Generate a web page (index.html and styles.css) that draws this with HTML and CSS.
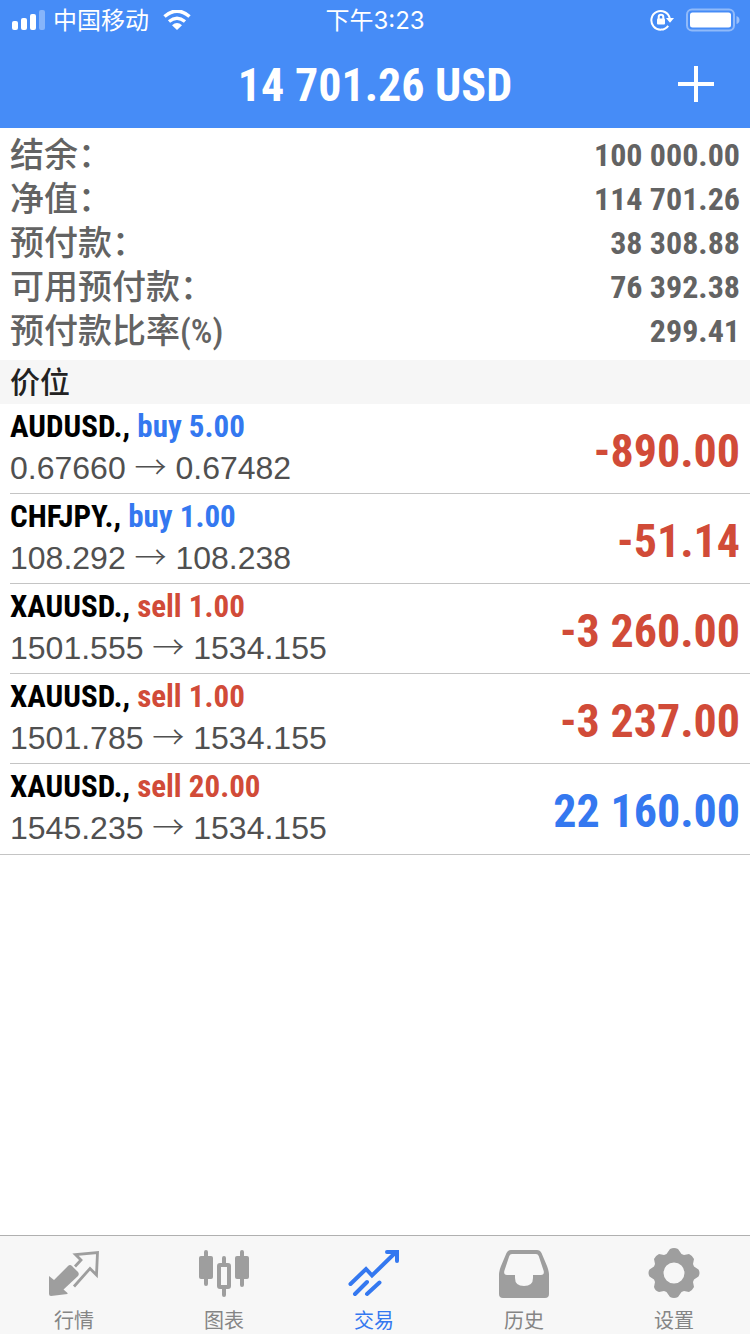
FILE: index.html
```html
<!DOCTYPE html>
<html lang="zh-CN">
<head>
<meta charset="utf-8">
<meta name="viewport" content="width=device-width, initial-scale=1">
<title>交易</title>
<link rel="stylesheet" href="styles.css">
</head>
<body>
<div class="app">
  <header class="header">
    <div class="status">
      <div class="status-left">
        <svg class="signal" viewBox="0 0 34 24" aria-hidden="true">
          <rect x="0" y="13" width="6" height="9" rx="2"/>
          <rect x="9" y="10" width="6" height="12" rx="2"/>
          <rect x="18" y="6" width="6" height="16" rx="2"/>
          <rect x="27" y="2" width="6" height="20" rx="2" opacity=".35"/>
        </svg>
        <span class="carrier">中国移动</span>
        <svg class="wifi" viewBox="0 0 28 20" aria-hidden="true">
          <path d="M1.500 6.500Q14-4.200 26.500 6.500" stroke-width="3.600"/>
          <path d="M6 11.500Q14 5 22 11.500" stroke-width="3.400"/>
          <path class="solid" d="M9 15.200Q14 11 19 15.200L14 20Z"/>
        </svg>
      </div>
      <time class="clock">下午3:23</time>
      <div class="status-right">
        <svg class="lock" viewBox="0 0 24 22" aria-hidden="true">
          <path class="line" d="M18.200 16.800A9.300 9.300 0 1 1 19.800 9.500"/>
          <path class="solid" d="M16 9H24L20 13.800Z"/>
          <rect class="solid" x="7" y="9.500" width="8" height="6" rx="1"/>
          <path class="line" d="M8.700 10V8a2.300 2.300 0 0 1 4.600 0V10"/>
        </svg>
        <svg class="battery" viewBox="0 0 54 24" aria-hidden="true">
          <rect x="1" y="1.500" width="47" height="21" rx="5" fill="none" stroke="#fff" stroke-width="2" opacity=".4"/>
          <rect x="4" y="4.500" width="41" height="15" rx="2.500" fill="#fff"/>
          <path d="M50.500 8Q53.500 9 53.500 12T50.500 16Z" fill="#fff" opacity=".45"/>
        </svg>
      </div>
    </div>
    <div class="nav">
      <h1 class="title">14 701.26 USD</h1>
      <button class="add" type="button" aria-label="新订单">
        <svg viewBox="0 0 36 36" aria-hidden="true"><path d="M0 18H36M18 0V36"/></svg>
      </button>
    </div>
  </header>

  <main class="content">
    <dl class="summary">
      <div class="summary-row"><dt>结余：</dt><dd>100 000.00</dd></div>
      <div class="summary-row"><dt>净值：</dt><dd>114 701.26</dd></div>
      <div class="summary-row"><dt>预付款：</dt><dd>38 308.88</dd></div>
      <div class="summary-row"><dt>可用预付款：</dt><dd>76 392.38</dd></div>
      <div class="summary-row"><dt>预付款比率(%)</dt><dd>299.41</dd></div>
    </dl>
    <h2 class="section">价位</h2>
    <ul class="positions">
      <li class="position">
        <div class="deal">
          <div class="symbol">AUDUSD., <span class="buy">buy 5.00</span></div>
          <div class="prices">0.67660 <span class="arrow">→</span> 0.67482</div>
        </div>
        <div class="profit loss">-890.00</div>
      </li>
      <li class="position">
        <div class="deal">
          <div class="symbol">CHFJPY., <span class="buy">buy 1.00</span></div>
          <div class="prices">108.292 <span class="arrow">→</span> 108.238</div>
        </div>
        <div class="profit loss">-51.14</div>
      </li>
      <li class="position">
        <div class="deal">
          <div class="symbol">XAUUSD., <span class="sell">sell 1.00</span></div>
          <div class="prices">1501.555 <span class="arrow">→</span> 1534.155</div>
        </div>
        <div class="profit loss">-3 260.00</div>
      </li>
      <li class="position">
        <div class="deal">
          <div class="symbol">XAUUSD., <span class="sell">sell 1.00</span></div>
          <div class="prices">1501.785 <span class="arrow">→</span> 1534.155</div>
        </div>
        <div class="profit loss">-3 237.00</div>
      </li>
      <li class="position">
        <div class="deal">
          <div class="symbol">XAUUSD., <span class="sell">sell 20.00</span></div>
          <div class="prices">1545.235 <span class="arrow">→</span> 1534.155</div>
        </div>
        <div class="profit gain">22 160.00</div>
      </li>
    </ul>
  </main>

  <nav class="tabs">
    <a class="tab" href="#quotes">
      <svg viewBox="0 0 52 52" aria-hidden="true">
        <path class="solid" d="M1 27L6 31L20 17Q22 15 24 17L30 23Q31.500 25 30 27L15.500 40.500L19.500 44V45L3 47Q1 47 1 45Z"/>
        <path class="line" d="M27 17.500L33 11L27.500 5.500L49.500 3.500L48.500 26L42 19.500L26 37.500" stroke-width="2.800"/>
      </svg>
      <span>行情</span>
    </a>
    <a class="tab" href="#charts">
      <svg viewBox="0 0 52 52" aria-hidden="true">
        <path class="line" d="M8 3V35M44 3V36M26 9V15M26 39V46" stroke-width="4" stroke-linecap="round"/>
        <rect class="solid" x="1" y="7" width="14" height="23" rx="2"/>
        <rect class="solid" x="37" y="7" width="14" height="23" rx="2"/>
        <rect class="line" x="21" y="16" width="10" height="22" rx="1" stroke-width="4"/>
      </svg>
      <span>图表</span>
    </a>
    <a class="tab active" href="#trade" aria-current="page">
      <svg viewBox="0 0 52 52" aria-hidden="true">
        <path class="line" d="M2.500 35L18 20L24 26.500L47 4M7 45L19 33M19 45L31.500 33.500" stroke-width="4" stroke-linecap="round"/>
        <path class="line" d="M39 3H49V12" stroke-width="4" stroke-linecap="round"/>
      </svg>
      <span>交易</span>
    </a>
    <a class="tab" href="#history">
      <svg viewBox="0 0 52 52" aria-hidden="true">
        <path class="solid" fill-rule="evenodd" d="M13 1H39Q42 1 43.500 4L49 17Q51 22 51 26V45Q51 49 47 49H5Q1 49 1 45V26Q1 22 3 17L8.500 4Q10 1 13 1ZM14 5Q12 5 11.300 7L6.300 22Q5.500 26 9 26H17V29Q17 37 26 37T35 29V26H43Q46.500 26 45.700 22L40.700 7Q40 5 38 5Z"/>
      </svg>
      <span>历史</span>
    </a>
    <a class="tab" href="#settings">
      <svg viewBox="0 0 52 52" aria-hidden="true">
        <path class="solid" fill-rule="evenodd" d="M18.500 5L22 0Q26-2 30 0L33.500 5L36 6L41 5Q45 7 46 10L45 15L46 17.500L50.500 20.500Q52.500 24 50.500 27.500L46 30.500L45 33L46 38Q44 42 41 43L36 42L33.500 43L30 48Q26 50 22 48L18.500 43L16 42L11 43Q7 42 6 38L7 33L6 30.500L1.500 27.500Q-.5 24 1.500 20.500L6 17.500L7 15L6 10Q7 7 11 5L16 6ZM26 13.500A10.500 10.500 0 1 0 26 34.500A10.500 10.500 0 1 0 26 13.500Z"/>
      </svg>
      <span>设置</span>
    </a>
  </nav>
</div>
</body>
</html>
```
FILE: styles.css
```css
* {
  box-sizing: border-box;
}

body,
h1,
h2,
dl,
dd,
ul {
  margin: 0;
  padding: 0;
}

body {
  background: #fff;
  font-family: "Liberation Sans", "Noto Sans CJK SC", sans-serif;
}

.app {
  display: flex;
  flex-direction: column;
  min-height: 100vh;
}

.header {
  background: #468cf7;
  color: #fff;
}

.status,
.nav {
  display: grid;
  grid-template-columns: 1fr auto 1fr;
  align-items: center;
}

.status {
  height: 40px;
  padding: 0 12px;
}

.status-left,
.status-right {
  display: flex;
  align-items: center;
}

.status-right {
  justify-content: flex-end;
  gap: 12px;
}

.signal {
  width: 34px;
  height: 24px;
  margin-right: 7px;
  fill: #fff;
}

.carrier,
.clock {
  padding-top: 2px;
  font: 400 24px/38px Inter, "Noto Sans CJK SC", sans-serif;
}

.wifi {
  width: 28px;
  height: 20px;
  margin-left: 14px;
  fill: none;
  stroke: #fff;
}

.wifi .solid {
  fill: #fff;
  stroke: none;
}

.lock {
  width: 24px;
  height: 22px;
}

.lock .line {
  fill: none;
  stroke: #fff;
  stroke-width: 2;
}

.lock .solid {
  fill: #fff;
}

.battery {
  width: 54px;
  height: 24px;
  margin-right: -2px;
}

.nav {
  height: 88px;
  padding: 0 36px;
}

.title,
.symbol,
.profit,
.summary {
  font-family: "Roboto Condensed", "Liberation Sans", "Noto Sans CJK SC", sans-serif;
  font-weight: bold;
}

.title {
  grid-column: 2;
  padding-top: 2px;
  font-size: 46px;
  line-height: 86px;
}

.add {
  justify-self: end;
  display: flex;
  padding: 0;
  border: 0;
  background: none;
}

.add svg {
  width: 36px;
  height: 36px;
  fill: none;
  stroke: #fff;
  stroke-width: 4;
}

.content {
  flex: 1;
}

.summary {
  padding: 5px 10px 7px;
  color: #636363;
  font-size: 32px;
  line-height: 44px;
}

.summary-row {
  display: flex;
  justify-content: space-between;
  height: 44px;
}

.summary dt {
  font-size: 34px;
  font-weight: 500;
}

.section {
  padding: 2px 10px 0;
  background: #f6f6f6;
  color: #222;
  font: 500 30px/42px "Liberation Sans", "Noto Sans CJK SC", sans-serif;
}

.positions {
  list-style: none;
  border-bottom: 1px solid #c4c4c4;
}

.position {
  display: flex;
  align-items: center;
  justify-content: space-between;
  height: 90px;
  margin-left: 10px;
  padding-right: 10px;
  border-bottom: 1px solid #c4c4c4;
}

.position:last-child {
  border-bottom-color: transparent;
}

.deal {
  padding-bottom: 4px;
}

.symbol {
  color: #000;
  font-size: 31px;
  line-height: 42px;
}

.prices {
  color: #505050;
  font-size: 32px;
  line-height: 40px;
}

.arrow {
  font-family: "Noto Sans CJK SC", sans-serif;
  font-weight: 300;
  line-height: 1;
}

.profit {
  padding-top: 4px;
  font-size: 46px;
  line-height: 84px;
}

.buy,
.gain {
  color: #3478f0;
}

.sell,
.loss {
  color: #d14b38;
}

.tabs {
  display: grid;
  grid-template-columns: repeat(5, 1fr);
  height: 99px;
  border-top: 1px solid #b0b0b0;
  background: #f7f7f7;
}

.tab {
  display: flex;
  flex-direction: column;
  align-items: center;
  padding: 13px 2px 0 0;
  color: #9e9e9e;
  font: 400 20px/30px "Noto Sans CJK SC", sans-serif;
  text-decoration: none;
}

.tab svg {
  width: 52px;
  height: 52px;
  margin-bottom: 4px;
  overflow: visible;
}

.tab .solid {
  fill: currentColor;
}

.tab .line {
  fill: none;
  stroke: currentColor;
}

.tab span {
  color: #858585;
}

.tab.active,
.tab.active span {
  color: #3478f0;
}
```
